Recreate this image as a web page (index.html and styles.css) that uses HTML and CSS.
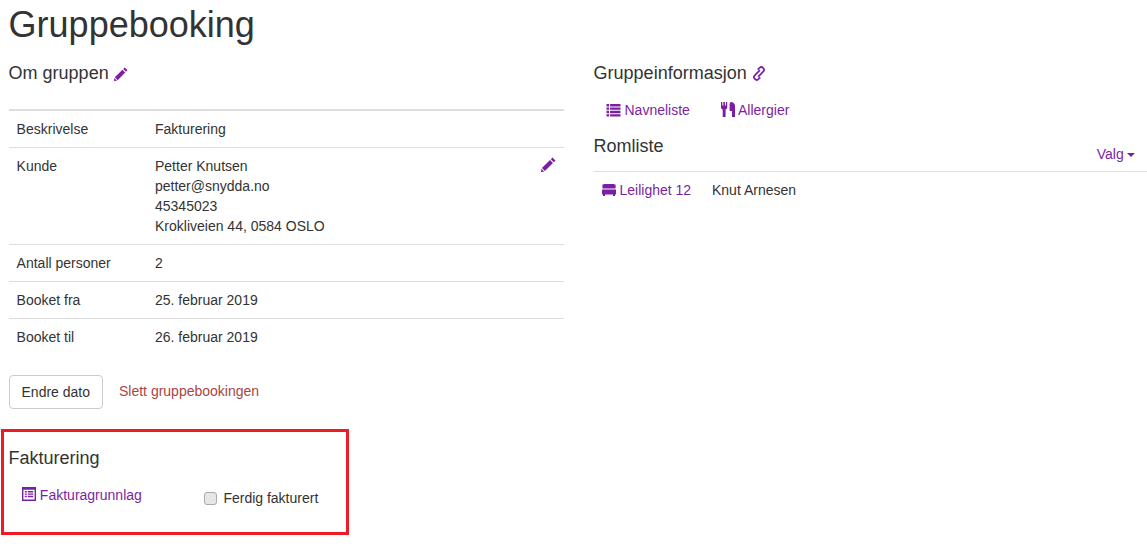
FILE: index.html
```html
<!DOCTYPE html>
<html lang="no">
<head>
<meta charset="utf-8">
<title>Gruppebooking</title>
<link rel="stylesheet" href="styles.css">
</head>
<body>
<h1 class="title">Gruppebooking</h1>
<div class="columns">
  <div class="left">
    <h3 class="heading">Om gruppen <svg class="icon pencil" viewBox="0 0 16 16"><path d="M12.2 0.6l3.2 3.2-1.7 1.7-3.2-3.2zM9.6 3.2l3.2 3.2-8.6 8.6-3.2-3.2zM0.4 12.6l3 3-3.4 0.4z"/></svg></h3>
    <table class="info">
      <tr><td class="key">Beskrivelse</td><td>Fakturering</td></tr>
      <tr>
        <td class="key">Kunde</td>
        <td class="customer">Petter Knutsen<br>petter@snydda.no<br>45345023<br>Krokliveien 44, 0584 OSLO
          <svg class="icon pencil edit" viewBox="0 0 16 16"><path d="M12.2 0.6l3.2 3.2-1.7 1.7-3.2-3.2zM9.6 3.2l3.2 3.2-8.6 8.6-3.2-3.2zM0.4 12.6l3 3-3.4 0.4z"/></svg>
        </td>
      </tr>
      <tr><td class="key">Antall personer</td><td>2</td></tr>
      <tr><td class="key">Booket fra</td><td>25. februar 2019</td></tr>
      <tr><td class="key">Booket til</td><td>26. februar 2019</td></tr>
    </table>
    <div class="actions">
      <button class="btn" type="button">Endre dato</button>
      <a class="danger" href="#">Slett gruppebookingen</a>
    </div>
    <section class="billing">
      <h3 class="heading billing-title">Fakturering</h3>
      <div class="billing-row">
        <a class="link basis" href="#"><svg class="icon list-alt" viewBox="0 0 14 14"><path fill-rule="evenodd" d="M0 0h14v14H0zM1.4 2.8v9.8h11.2V2.8zM2.8 4h2v1.4h-2zM5.8 4h5.4v1.4H5.8zM2.8 6.4h2v1.4h-2zM5.8 6.4h5.4v1.4H5.8zM2.8 8.8h2v1.4h-2zM5.8 8.8h5.4v1.4H5.8z"/></svg> Fakturagrunnlag</a>
        <label class="check"><input type="checkbox"> Ferdig fakturert</label>
      </div>
    </section>
  </div>
  <div class="right">
    <h3 class="heading">Gruppeinformasjon <svg class="icon chain" viewBox="0 0 14 16"><path fill="none" stroke="currentColor" stroke-width="1.8" stroke-linecap="round" d="M6.2 3.4l1.7-1.6c1-0.9 2.4-0.8 3.3 0.1l0.5 0.6c0.9 1 0.9 2.3 0 3.2L6.6 11M7.8 12.6l-1.7 1.6c-1 0.9-2.4 0.8-3.3-0.1l-0.5-0.6c-0.9-1-0.9-2.3 0-3.2L7.4 5"/></svg></h3>
    <nav class="info-links">
      <a class="link" href="#"><svg class="icon list" viewBox="0 0 14 14"><path d="M0 1h2.6v2.4H0zM3.6 1H14v2.4H3.6zM0 4.4h2.6v2.4H0zM3.6 4.4H14v2.4H3.6zM0 7.8h2.6v2.4H0zM3.6 7.8H14v2.4H3.6zM0 11.2h2.6v2.4H0zM3.6 11.2H14v2.4H3.6z"/></svg> Navneliste</a>
      <a class="link" href="#"><svg class="icon cutlery" viewBox="0 0 14 15"><path d="M0 0h1.3v3.6h1V0h1.6v3.6h1V0h1.3v5.4c0 1-0.7 1.7-1.6 1.9V15H1.7V7.3C0.8 7.1 0 6.4 0 5.4zM9.6 0C12.2 0 14 1.8 14 3.8V15h-3V9H8.6V3C8.6 1.6 8.9 0.5 9.6 0z"/></svg> Allergier</a>
    </nav>
    <div class="room-head">
      <h3 class="heading room-title">Romliste</h3>
      <a class="link menu" href="#">Valg <span class="caret"></span></a>
    </div>
    <div class="room-row">
      <a class="link room" href="#"><svg class="icon" viewBox="0 0 14 14"><path d="M2.4 1h9.2c0.8 0 1.4 0.6 1.4 1.4V5.4H1V2.4C1 1.6 1.6 1 2.4 1zM0 6.6h14v5H0zM0 1.6h0.6v3.6H0zM13.4 1.6H14v3.6h-0.6zM1 11.6h2v1.4H1zM11 11.6h2v1.4h-2z"/></svg> Leilighet 12</a>
      <span class="guest">Knut Arnesen</span>
    </div>
  </div>
</div>
</body>
</html>
```
FILE: styles.css
```css
* { box-sizing: border-box; }
html, body { margin: 0; padding: 0; }
body {
  font-family: "Liberation Sans", Arial, sans-serif;
  font-size: 14px;
  line-height: 20px;
  color: #333;
  background: #fff;
  padding: 0 0 0 8.6px;
  overflow: hidden;
}
.title { margin: 5px 0 0; font-size: 36px; line-height: 40px; font-weight: 400; }
.columns { display: grid; grid-template-columns: 555px 553px; column-gap: 30px; margin-top: 15px; }
.heading { margin: 0; font-size: 18px; line-height: 26px; font-weight: 400; }
.icon { width: 14px; height: 14px; fill: currentColor; vertical-align: -2px; }
.pencil { color: #7b1fa2; }
.chain { color: #7b1fa2; width: 14px; height: 15px; vertical-align: -2px; }
.list { width: 15px; }
.cutlery { width: 14px; height: 15px; vertical-align: -2px; }
.info { width: 100%; margin-top: 23px; border-collapse: collapse; border-top: 2px solid #ddd; }
.info td { padding: 8px; vertical-align: top; border-top: 1px solid #ddd; }
.info tr:first-child td { border-top: 0; }
.info .key { width: 138.4px; }
.customer { position: relative; }
.edit { position: absolute; top: 9px; right: 8px; width: 15px; height: 15px; }
.actions { display: flex; align-items: flex-start; margin-top: 20px; }
.btn {
  height: 34px; width: 94.4px; padding: 0;
  font: inherit; color: #333; background: #fff;
  border: 1px solid #ccc; border-radius: 4px;
}
.danger { margin: 6px 0 0 16px; color: #a94442; text-decoration: none; }
.billing {
  width: 348px; height: 106px; margin: 20px 0 0 -7.6px; padding: 13px 0 0 4.6px;
  border: 3px solid #ed1c24;
}
.billing-title { line-height: 26px; }
.billing-row { display: flex; align-items: flex-start; margin-top: 14px; padding-left: 13.4px; }
.link { color: #7b1fa2; text-decoration: none; }
.basis { width: 182px; }
.list-alt { width: 14px; height: 14px; vertical-align: -1px; }
.check { display: flex; align-items: center; margin-top: 3px; color: #333; }
.check input {
  appearance: none; width: 13px; height: 13px; margin: 0 6.4px 0 0;
  background: #e6e6e6; border: 1px solid #aaa; border-radius: 3px;
}
.info-links { display: flex; gap: 31px; margin-top: 14px; padding-left: 12px; }
.room-head { position: relative; height: 39px; margin-top: 13px; border-bottom: 1px solid #ddd; }
.menu { position: absolute; right: 12px; top: 11px; }
.caret {
  display: inline-block; width: 0; height: 0; margin-left: -1px; vertical-align: middle;
  border-top: 4px solid; border-left: 4px solid transparent; border-right: 4px solid transparent;
}
.room-row { display: flex; padding: 8px 0 0 8px; }
.room { width: 110.4px; }
```
